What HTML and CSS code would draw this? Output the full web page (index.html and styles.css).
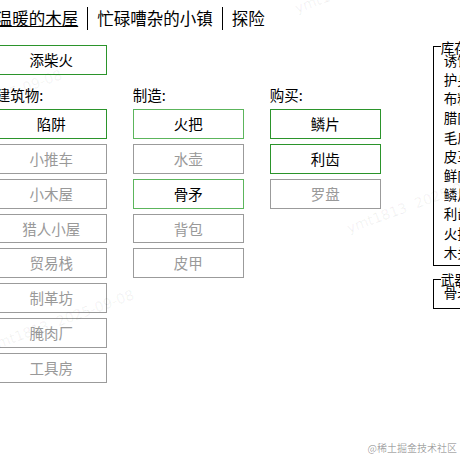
FILE: index.html
```html
<!DOCTYPE html>
<html lang="zh-CN">
<head>
<meta charset="utf-8">
<title>温暖的木屋</title>
<link rel="stylesheet" href="styles.css">
</head>
<body>
<div class="page">
  <nav class="header">
    <span class="tab active">温暖的木屋</span>
    <span class="tab">忙碌嘈杂的小镇</span>
    <span class="tab">探险</span>
  </nav>
  <div class="content">
    <div class="main">
      <div class="btn on">添柴火</div>
      <div class="cols">
        <div class="col">
          <div class="col-title">建筑物:</div>
          <div class="btn on">陷阱</div>
          <div class="btn off">小推车</div>
          <div class="btn off">小木屋</div>
          <div class="btn off">猎人小屋</div>
          <div class="btn off">贸易栈</div>
          <div class="btn off">制革坊</div>
          <div class="btn off">腌肉厂</div>
          <div class="btn off">工具房</div>
        </div>
        <div class="col">
          <div class="col-title">制造:</div>
          <div class="btn on light">火把</div>
          <div class="btn off">水壶</div>
          <div class="btn on light">骨矛</div>
          <div class="btn off">背包</div>
          <div class="btn off">皮甲</div>
        </div>
        <div class="col">
          <div class="col-title">购买:</div>
          <div class="btn on">鳞片</div>
          <div class="btn on">利齿</div>
          <div class="btn off">罗盘</div>
        </div>
      </div>
    </div>
    <div class="side">
      <fieldset class="store">
        <legend>库存</legend>
        <div class="row"><span>诱饵</span><span class="num">8</span></div>
        <div class="row"><span>护身符</span><span class="num">1</span></div>
        <div class="row"><span>布料</span><span class="num">12</span></div>
        <div class="row"><span>腊肉</span><span class="num">30</span></div>
        <div class="row"><span>毛皮</span><span class="num">85</span></div>
        <div class="row"><span>皮革</span><span class="num">20</span></div>
        <div class="row"><span>鲜肉</span><span class="num">47</span></div>
        <div class="row"><span>鳞片</span><span class="num">6</span></div>
        <div class="row"><span>利齿</span><span class="num">9</span></div>
        <div class="row"><span>火把</span><span class="num">3</span></div>
        <div class="row"><span>木头</span><span class="num">512</span></div>
      </fieldset>
      <fieldset class="store weapons">
        <legend>武器</legend>
        <div class="row"><span>骨矛</span><span class="num">1</span></div>
      </fieldset>
    </div>
  </div>
</div>
<span class="wm wm-a">ymt1813&nbsp;&nbsp;2025-09-08</span>
<span class="wm wm-b">ymt1813&nbsp;&nbsp;2025-09-08</span>
<span class="wm wm-c">ymt1813&nbsp;&nbsp;2025-09-08</span>
<span class="wm wm-d">ymt1813&nbsp;&nbsp;2025-09-08</span>
<span class="credit">@稀土掘金技术社区</span>
</body>
</html>
```
FILE: styles.css
```css
html, body {
  margin: 0;
  height: 100%;
  overflow: hidden;
  background: #fff;
}
body {
  font-family: "Noto Sans CJK SC", "Noto Sans", sans-serif;
  color: #000;
}
.page {
  margin-left: -4.3px;
  width: 720px;
}
.header {
  display: flex;
  padding-top: 7px;
  height: 23px;
  font-size: 16.5px;
  line-height: 23px;
}
.tab {
  padding: 0 9px;
  border-left: 1px solid #000;
  white-space: nowrap;
}
.tab:first-child {
  padding-left: 0;
  border-left: 0;
}
.tab.active {
  text-decoration: underline;
}
.content {
  display: flex;
  align-items: flex-start;
  margin-top: 15px;
}
.main {
  width: 385px;
  flex: none;
}
.btn {
  box-sizing: border-box;
  width: 111px;
  height: 29.8px;
  border: 1px solid #9b9b9b;
  margin-bottom: 5px;
  text-align: center;
  font-size: 14.5px;
  line-height: 27.8px;
  white-space: nowrap;
}
.btn.on {
  border-color: #2b942b;
  color: #000;
}
.btn.on.light {
  border-color: #5cb55c;
}
.btn.off {
  color: #999;
}
.cols {
  display: flex;
  gap: 26px;
  margin-top: 10.5px;
}
.col {
  width: 111px;
}
.col-title {
  font-size: 14.5px;
  line-height: 20px;
  margin-bottom: 4px;
  white-space: nowrap;
}
.side {
  margin-left: 52px;
  margin-top: -2.3px;
  flex: none;
}
.store {
  margin: 0;
  padding: 0 0 3px 10px;
  border: 1px solid #000;
  width: 150px;
  min-width: 0;
  font-size: 13.5px;
}
.store legend {
  font-size: 13.5px;
  line-height: 8px;
  padding: 0;
  margin-left: -3px;
}
.row {
  display: flex;
  justify-content: space-between;
  line-height: 19.2px;
  padding-right: 10px;
  white-space: nowrap;
}
.weapons {
  margin-top: 9.5px;
  padding-bottom: 5px;
}
.wm {
  position: absolute;
  font-family: "DejaVu Sans", sans-serif;
  font-size: 14px;
  color: rgba(0, 0, 0, 0.06);
  white-space: nowrap;
  transform: rotate(-20deg);
  transform-origin: left bottom;
  pointer-events: none;
}
.wm-a { left: -80px; top: 118px; }
.wm-b { left: -8px; top: 338px; }
.wm-c { left: 350px; top: 220px; }
.wm-d { left: 298px; top: 0px; }
.credit {
  position: absolute;
  right: 3px;
  bottom: 5px;
  font-size: 10px;
  color: rgba(0, 0, 0, 0.38);
  white-space: nowrap;
}
```
